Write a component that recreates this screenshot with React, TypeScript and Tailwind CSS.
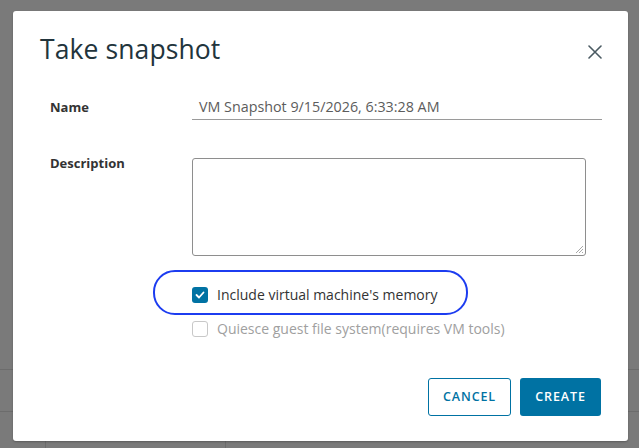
import React from "react";

export default function App() {
  const font = { fontFamily: '"Open Sans", "Liberation Sans", sans-serif' };
  return (
    <div className="relative w-[639px] h-[448px] overflow-hidden bg-[#7a7a7a]" style={font}>
      {/* backdrop page lines */}
      <div className="flex flex-col h-full">
        <div className="h-[370px] border-b border-[#6c6c6c]" />
        <div className="h-[42px] border-b border-[#6c6c6c]" />
        <div className="flex flex-1">
          <div className="w-[46px] border-r border-[#6c6c6c]" />
          <div className="w-[180px] border-r border-[#6c6c6c]" />
        </div>
      </div>

      {/* dialog */}
      <div className="absolute left-[13px] top-[11px] w-[615px] h-[430px] bg-white rounded-[3px] shadow-[0_1px_2px_rgba(0,0,0,0.25)]">
        <div className="flex items-start justify-between pl-[27px] pr-[26px] pt-[22px]">
          <h1 className="text-[26.5px] leading-[32px] text-[#22343c] tracking-[0.1px]">Take snapshot</h1>
          <svg width="14" height="14" viewBox="0 0 14 14" className="mt-[12px]" fill="none" stroke="#4a5a62" strokeWidth="1.6" strokeLinecap="round">
            <path d="M1 1 L13 13 M13 1 L1 13" />
          </svg>
        </div>

        <div className="flex items-end mt-[33px] pl-[37px]">
          <div className="w-[142px] text-[13px] font-bold text-[#333] leading-[18px] pb-[4px]">Name</div>
          <div className="w-[410px] border-b border-[#9a9a9a] pl-[7px] pb-[3px] text-[14.3px] leading-[18px] text-[#5c5c5c]">
            VM Snapshot 9/15/2026, 6:33:28 AM
          </div>
        </div>

        <div className="flex mt-[38px] pl-[37px]">
          <div className="w-[142px] text-[13px] font-bold text-[#333] leading-[18px] mt-[-4px]">Description</div>
          <div className="relative w-[394px] h-[98px] border border-[#8e8e8e] rounded-[3px]">
            <svg width="10" height="10" viewBox="0 0 10 10" className="absolute right-[1px] bottom-[1px]" stroke="#a8a8a8" strokeWidth="1">
              <path d="M9 2 L2 9 M9 5 L5 9 M9 8 L8 9" />
            </svg>
          </div>
        </div>

        <div className="flex flex-col gap-[16px] mt-[30px] pl-[179px]">
          <div className="relative flex items-center gap-[9px]">
            <div className="w-[16px] h-[16px] rounded-[3px] bg-[#0072a3] flex items-center justify-center">
              <svg width="10" height="8" viewBox="0 0 10 8" fill="none" stroke="white" strokeWidth="1.8" strokeLinecap="round" strokeLinejoin="round">
                <path d="M1.5 4 L4 6.5 L8.5 1.5" />
              </svg>
            </div>
            <span className="text-[14px] leading-[18px] text-[#333]">Include virtual machine's memory</span>
            <div className="absolute left-[-39px] top-[-16px] w-[315px] h-[45px] rounded-[22px] border-[2.5px] border-[#1c3cf0] pointer-events-none" />
          </div>
          <div className="flex items-center gap-[9px]">
            <div className="w-[16px] h-[16px] rounded-[3px] border border-[#c8c8c8] bg-white" />
            <span className="text-[14px] leading-[18px] text-[#a0a0a0]">Quiesce guest file system(requires VM tools)</span>
          </div>
        </div>

        <div className="absolute right-[27px] bottom-[25px] flex gap-[9px]">
          <button className="w-[83px] h-[38px] rounded-[3px] border border-[#0072a3] text-[#0072a3] text-[12.5px] font-semibold tracking-[0.9px] bg-white">
            CANCEL
          </button>
          <button className="w-[81px] h-[38px] rounded-[3px] bg-[#0072a3] text-white text-[12.5px] font-semibold tracking-[0.9px]">
            CREATE
          </button>
        </div>
      </div>
    </div>
  );
}
